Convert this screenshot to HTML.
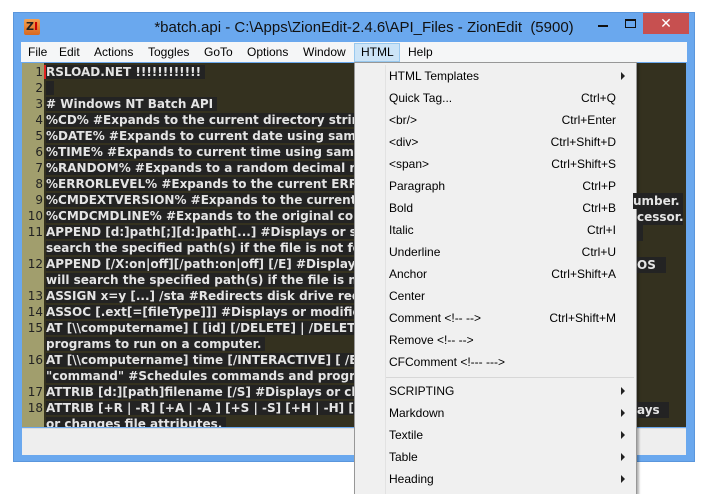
<!DOCTYPE html>
<html><head><style>
*{margin:0;padding:0;box-sizing:border-box}
html{width:723px;height:494px;overflow:hidden}
body{width:723px;height:494px;background:#fff;position:relative;overflow:hidden;font-family:"Liberation Sans",sans-serif}
.win{position:absolute;left:13px;top:12px;width:682px;height:450px;background:#6aa8ee;border:1px solid #5a96dc}
.title{position:absolute;left:0;top:0;width:100%;height:30px;text-align:center;font-size:15px;line-height:30px;color:#111;padding-left:20px}
.ico{position:absolute;left:10px;top:6px;width:16px;height:16px;background:linear-gradient(#f5a050,#d86820);border-radius:2px;font:bold 11px "DejaVu Sans",sans-serif;color:#222;line-height:16px;text-align:center}
.close{position:absolute;left:629px;top:0;width:46px;height:21px;background:#c75050;color:#fff;text-align:center;font-size:14px;line-height:21px}
.menubar{position:absolute;left:21px;top:42px;width:666px;height:20px;background:#f5f6f7;font-size:12px}
.menubar span{position:absolute;top:3px}
.editor{position:absolute;left:22px;top:63px;width:664px;height:364px;background:#34311f;overflow:hidden}
.gut{position:absolute;left:0;top:0;width:22px;height:100%;background:#a19e6d}
.ln{position:absolute;left:0;width:22px;text-align:right;font:12px "DejaVu Sans",sans-serif;color:#222;padding-right:1px}
.tx{position:absolute;left:24px;white-space:pre;font:bold 12px "DejaVu Sans",sans-serif;color:#e4e4e4;line-height:16px}
.tx span{background:#232323;padding-right:4px}
.status{position:absolute;left:22px;top:428px;width:664px;height:27px;background:#eeeeee;border-top:1px solid #ddd}
.menu{position:absolute;left:354px;top:62px;width:283px;height:432px;background:#f0f0f0;border:1px solid #979797;border-bottom:none;box-shadow:2px 2px 2px rgba(0,0,0,.3);font-size:12px;color:#000}
.menu .div{position:absolute;left:30px;top:2px;width:1px;height:100%;background:#e2e2e2}
.mi{position:absolute;left:34px;width:227px}
.mi b{font-weight:normal;position:absolute;right:0;top:0}
.ar{position:absolute;left:266px;width:0;height:0;border-left:4px solid #222;border-top:4px solid transparent;border-bottom:4px solid transparent}
.rf{position:absolute;white-space:pre;font:bold 12px "DejaVu Sans",sans-serif;color:#e4e4e4;line-height:16px;background:#232323}
</style></head><body>
<div class="win">
<div class="ico">Z<span style="color:#c00">I</span></div>
<div class="title">*batch.api - C:\Apps\ZionEdit-2.4.6\API_Files - ZionEdit&nbsp; (5900)</div>
<div style="position:absolute;left:584px;top:12px;width:10px;height:2px;background:#111"></div>
<div style="position:absolute;left:611px;top:6px;width:11px;height:9px;border:1px solid #111;border-top-width:2px"></div>
<div class="close">✕</div>
</div>
<div class="menubar">
<span style="left:7px">File</span><span style="left:38px">Edit</span><span style="left:73px">Actions</span><span style="left:127px">Toggles</span><span style="left:183px">GoTo</span><span style="left:226px">Options</span><span style="left:282px">Window</span>
<span style="left:333px;top:1px;width:46px;height:19px;background:#cce4f7;border:1px solid #99c9ef"></span><span style="left:340px">HTML</span><span style="left:387px">Help</span>
</div>
<div class="editor">
<div class="gut"></div>
<div style="position:absolute;left:22px;top:2px;width:2px;height:14px;background:#e02020"></div>
<div id="c"></div>
</div>
<div class="status"></div>
<div class="menu">
<div class="div"></div>
<div class="mi" style="top:6px">HTML Templates</div><div class="ar" style="top:9px"></div>
<div class="mi" style="top:28px">Quick Tag...<b>Ctrl+Q</b></div>
<div class="mi" style="top:50px">&lt;br/&gt;<b>Ctrl+Enter</b></div>
<div class="mi" style="top:72px">&lt;div&gt;<b>Ctrl+Shift+D</b></div>
<div class="mi" style="top:94px">&lt;span&gt;<b>Ctrl+Shift+S</b></div>
<div class="mi" style="top:116px">Paragraph<b>Ctrl+P</b></div>
<div class="mi" style="top:138px">Bold<b>Ctrl+B</b></div>
<div class="mi" style="top:160px">Italic<b>Ctrl+I</b></div>
<div class="mi" style="top:182px">Underline<b>Ctrl+U</b></div>
<div class="mi" style="top:204px">Anchor<b>Ctrl+Shift+A</b></div>
<div class="mi" style="top:226px">Center</div>
<div class="mi" style="top:248px">Comment &lt;!-- --&gt;<b>Ctrl+Shift+M</b></div>
<div class="mi" style="top:270px">Remove &lt;!-- --&gt;</div>
<div class="mi" style="top:292px">CFComment &lt;!--- ---&gt;</div>
<div style="position:absolute;left:31px;top:314px;width:248px;height:1px;background:#d7d7d7"></div>
<div class="mi" style="top:321px">SCRIPTING</div><div class="ar" style="top:324px"></div>
<div class="mi" style="top:343px">Markdown</div><div class="ar" style="top:346px"></div>
<div class="mi" style="top:365px">Textile</div><div class="ar" style="top:368px"></div>
<div class="mi" style="top:387px">Table</div><div class="ar" style="top:390px"></div>
<div class="mi" style="top:409px">Heading</div><div class="ar" style="top:412px"></div>
</div>
<div class="rf" style="left:633px;top:193px;width:50px">umber.</div>
<div class="rf" style="left:637px;top:209px;width:46px">cessor.</div>
<div class="rf" style="left:637px;top:225px;width:6px"> </div>
<div class="rf" style="left:637px;top:257px;width:29px">OS</div>
<div class="rf" style="left:637px;top:402px;width:32px">ays</div>
<script>
var L=[["1","RSLOAD.NET !!!!!!!!!!!!"],["2"," "],["3","# Windows NT Batch API"],["4","%CD% #Expands to the current directory string and more text here"],["5","%DATE% #Expands to current date using same format as DATE command"],["6","%TIME% #Expands to current time using same format as TIME command"],["7","%RANDOM% #Expands to a random decimal number between 0 and 32767"],["8","%ERRORLEVEL% #Expands to the current ERRORLEVEL value here"],["9","%CMDEXTVERSION% #Expands to the current Command Processor Extensions version n"],["10","%CMDCMDLINE% #Expands to the original command line that invoked the Command Pro"],["11","APPEND [d:]path[;][d:]path[...] #Displays or sets the search path for data files, and"],["","search the specified path(s) if the file is not found in the current dir"],["12","APPEND [/X:on|off][/path:on|off] [/E] #Displays or sets the search path so that MS-D"],["","will search the specified path(s) if the file is not found in dir"],["13","ASSIGN x=y [...] /sta #Redirects disk drive requests to a different drive"],["14","ASSOC [.ext[=[fileType]]] #Displays or modifies file extension associations now"],["15","AT [\\\\computername] [ [id] [/DELETE] | /DELETE [/YES]] #Schedules commands and"],["","programs to run on a computer."],["16","AT [\\\\computername] time [/INTERACTIVE] [ /EVERY:date[,...] | /NEXT:date[,...]]"],["","\"command\" #Schedules commands and programs to run on a computer at"],["17","ATTRIB [d:][path]filename [/S] #Displays or changes file attributes here now"],["18","ATTRIB [+R | -R] [+A | -A ] [+S | -S] [+H | -H] [d:][path]filename [/S] #Displa"],["","or changes file attributes."]];
var h="";for(var i=0;i<L.length;i++){var y=i*16+1;
if(L[i][0])h+='<div class="ln" style="top:'+(y+1)+'px">'+L[i][0]+'</div>';
var t=L[i][1].replace(/&/g,"&amp;").replace(/</g,"&lt;");
h+='<div class="tx" style="top:'+y+'px"><span>'+t+'</span></div>';}
document.getElementById("c").innerHTML=h;
</script>
</body></html>
